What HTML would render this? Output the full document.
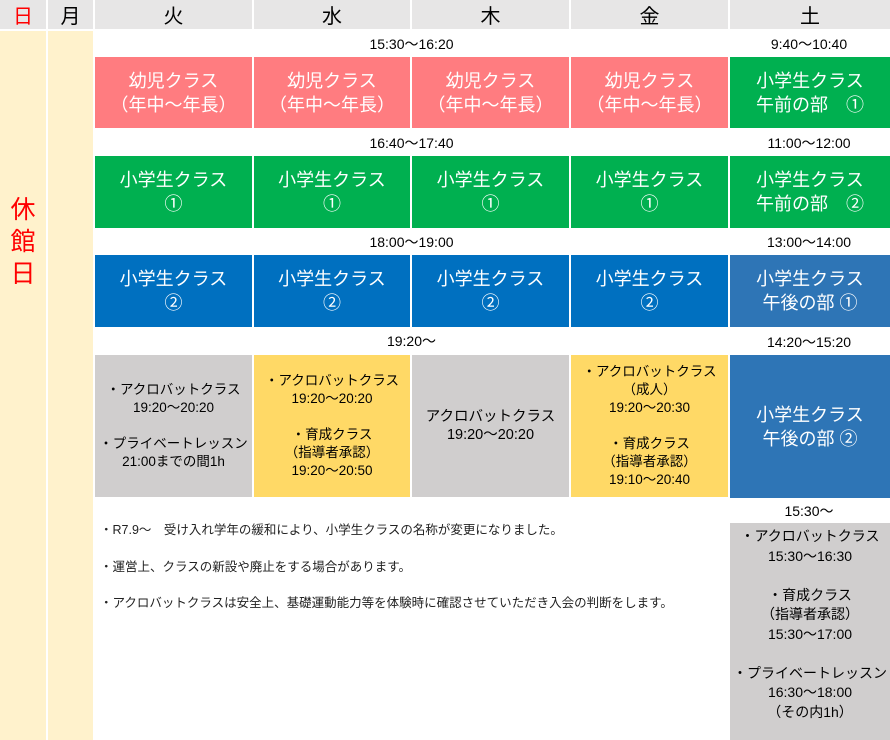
<!DOCTYPE html><html><head><meta charset="utf-8"><style>
*{margin:0;padding:0;box-sizing:border-box}
body{width:890px;height:740px;background:#fff;position:relative;overflow:hidden;font-family:"Liberation Sans","Noto Sans CJK JP",sans-serif;color:#000}
.c{position:absolute;display:flex;align-items:center;justify-content:center;text-align:center;flex-direction:column}
.h{background:#e7e6e6;font-size:20px;top:0;height:29px}
.t{font-size:14px;height:26px}
.b{color:#fff;font-size:18px;line-height:24px}
.pk{background:#ff7c80}.gr{background:#00b050}.bl{background:#0070c0}.sb{background:#2e75b6}
.gy{background:#d0cece;font-size:13.5px;line-height:18px}.yl{background:#ffd966;font-size:13.5px;line-height:18px}
.cr{background:#fff2cc}
.n{position:absolute;left:100px;font-size:12.5px;color:#222}
</style></head><body>
<div class="c h" style="left:0;width:46px;color:#f00">日</div>
<div class="c h" style="left:48px;width:45px">月</div>
<div class="c h" style="left:95px;width:157px">火</div>
<div class="c h" style="left:254px;width:156px">水</div>
<div class="c h" style="left:412px;width:157px">木</div>
<div class="c h" style="left:571px;width:157px">金</div>
<div class="c h" style="left:730px;width:160px">土</div>
<div class="c cr" style="left:0;top:31px;width:46px;height:709px;justify-content:flex-start;padding-top:163px;color:#f00;font-size:25px;line-height:32px">休<br>館<br>日</div>
<div class="c cr" style="left:48px;top:31px;width:45px;height:709px"></div>

<div class="c t" style="left:95px;width:633px;top:31px">15:30～16:20</div>
<div class="c t" style="left:730px;width:158px;top:31px">9:40～10:40</div>
<div class="c b pk" style="left:95px;top:57px;width:157px;height:71px">幼児クラス<br>（年中～年長）</div>
<div class="c b pk" style="left:254px;top:57px;width:156px;height:71px">幼児クラス<br>（年中～年長）</div>
<div class="c b pk" style="left:412px;top:57px;width:157px;height:71px">幼児クラス<br>（年中～年長）</div>
<div class="c b pk" style="left:571px;top:57px;width:157px;height:71px">幼児クラス<br>（年中～年長）</div>
<div class="c b gr" style="left:730px;top:57px;width:160px;height:71px">小学生クラス<br>午前の部　①</div>

<div class="c t" style="left:95px;width:633px;top:130px">16:40～17:40</div>
<div class="c t" style="left:730px;width:158px;top:130px">11:00～12:00</div>
<div class="c b gr" style="left:95px;top:156px;width:157px;height:72px">小学生クラス<br>①</div>
<div class="c b gr" style="left:254px;top:156px;width:156px;height:72px">小学生クラス<br>①</div>
<div class="c b gr" style="left:412px;top:156px;width:157px;height:72px">小学生クラス<br>①</div>
<div class="c b gr" style="left:571px;top:156px;width:157px;height:72px">小学生クラス<br>①</div>
<div class="c b gr" style="left:730px;top:156px;width:160px;height:72px">小学生クラス<br>午前の部　②</div>

<div class="c t" style="left:95px;width:633px;top:229px">18:00～19:00</div>
<div class="c t" style="left:730px;width:158px;top:229px">13:00～14:00</div>
<div class="c b bl" style="left:95px;top:255px;width:157px;height:72px">小学生クラス<br>②</div>
<div class="c b bl" style="left:254px;top:255px;width:156px;height:72px">小学生クラス<br>②</div>
<div class="c b bl" style="left:412px;top:255px;width:157px;height:72px">小学生クラス<br>②</div>
<div class="c b bl" style="left:571px;top:255px;width:157px;height:72px">小学生クラス<br>②</div>
<div class="c b sb" style="left:730px;top:255px;width:160px;height:72px">小学生クラス<br>午後の部 ①</div>

<div class="c t" style="left:95px;width:633px;top:328px">19:20～</div>
<div class="c t" style="left:730px;width:158px;top:329px">14:20～15:20</div>
<div class="c gy" style="left:95px;top:355px;width:157px;height:142px">・アクロバットクラス<br>19:20～20:20<br><br>・プライベートレッスン<br>21:00までの間1h</div>
<div class="c yl" style="left:254px;top:355px;width:156px;height:142px">・アクロバットクラス<br>19:20～20:20<br><br>・育成クラス<br>（指導者承認）<br>19:20～20:50</div>
<div class="c gy" style="left:412px;top:355px;width:157px;height:142px;font-size:14.5px">アクロバットクラス<br>19:20～20:20</div>
<div class="c yl" style="left:571px;top:355px;width:157px;height:142px">・アクロバットクラス<br>（成人）<br>19:20～20:30<br><br>・育成クラス<br>（指導者承認）<br>19:10～20:40</div>
<div class="c b sb" style="left:730px;top:355px;width:160px;height:143px">小学生クラス<br>午後の部 ②</div>

<div class="c t" style="left:730px;width:158px;top:500px;height:22px">15:30～</div>
<div class="c gy" style="left:730px;top:523px;width:160px;height:217px;justify-content:flex-start;padding-top:4px;line-height:19.5px;font-size:14px">・アクロバットクラス<br>15:30～16:30<br><br>・育成クラス<br>（指導者承認）<br>15:30～17:00<br><br>・プライベートレッスン<br>16:30～18:00<br>（その内1h）</div>

<div class="n" style="top:519px">・R7.9～　受け入れ学年の緩和により、小学生クラスの名称が変更になりました。</div>
<div class="n" style="top:556px">・運営上、クラスの新設や廃止をする場合があります。</div>
<div class="n" style="top:592px">・アクロバットクラスは安全上、基礎運動能力等を体験時に確認させていただき入会の判断をします。</div>
</body></html>
